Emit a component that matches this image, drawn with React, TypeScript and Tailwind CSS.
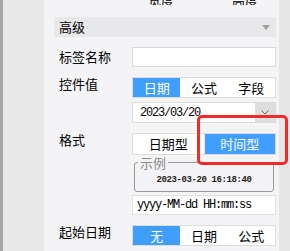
import React from "react";

const Seg = ({ items, active }: { items: string[]; active: number }) => (
  <div className="flex h-[21px] w-[144px] border border-[#dcdcdc] bg-white">
    {items.map((t, i) => (
      <div
        key={t}
        className={
          i === active
            ? "flex flex-1 items-center justify-center bg-[#409eff] text-white"
            : "flex flex-1 items-center justify-center text-black"
        }
      >
        {t}
      </div>
    ))}
  </div>
);

export default function App() {
  return (
    <div className="relative flex h-[251px] w-[290px] overflow-hidden font-['Noto_Sans_CJK_SC','Noto_Sans',sans-serif] text-[13px] text-black">
      <div className="w-[3px] bg-[#a6a6a6]" />
      <div className="w-[41px] bg-[#e8e8e8]" />
      <div className="w-[235px] bg-[#f4f4f6] pl-[10px] pr-[3px]">
        {/* cut off column headers */}
        <div className="h-[5px] overflow-hidden">
          <div className="-mt-[7px] flex pl-[94px] leading-[13px]">
            <span>宽度</span>
            <span className="ml-[58px]">高度</span>
          </div>
        </div>

        <div className="mt-[12px] flex h-[20px] items-center justify-between bg-[#e8e8ea] pl-[5px] pr-[6px]">
          <span>高级</span>
          <svg width="8" height="5" viewBox="0 0 8 5">
            <path d="M0 0 H8 L4 5 Z" fill="#a0a0a0" />
          </svg>
        </div>

        <div className="mt-[10px] flex items-center">
          <div className="w-[78px] pl-[5px]">标签名称</div>
          <div className="h-[20px] w-[144px] border border-[#d9d9d9] bg-white" />
        </div>

        <div className="mt-[10px] flex items-start">
          <div className="w-[78px] pl-[5px] leading-[14px]">控件值</div>
          <Seg items={["日期", "公式", "字段"]} active={0} />
        </div>

        <div className="ml-[78px] mt-[4px] flex h-[21px] w-[144px] border border-[#dcdcdc] bg-white">
          <div className="flex flex-1 items-center pl-[7px] font-['Liberation_Mono',monospace] text-[12px] tracking-[-1.2px]">
            2023/03/20
          </div>
          <div className="flex w-[20px] items-center justify-center bg-[#dedede]">
            <svg width="8" height="5" viewBox="0 0 8 5">
              <path d="M0.5 0.5 L4 4 L7.5 0.5" fill="none" stroke="#666" strokeWidth="1" />
            </svg>
          </div>
        </div>

        <div className="mt-[10px] flex items-start">
          <div className="w-[78px] pl-[5px] leading-[14px]">格式</div>
          <div className="grid h-[22px] w-[144px] grid-cols-2 gap-px border border-[#dcdcdc] bg-[#e6e6e6]">
            <div className="flex items-center justify-center bg-white">日期型</div>
            <div className="flex items-center justify-center bg-[#409eff] text-white">时间型</div>
          </div>
        </div>

        <fieldset className="ml-[80px] mt-[1px] w-[140px] rounded-[3px] border border-[#9a9a9a]">
          <legend className="ml-[3px] px-[2px] text-[13px] leading-[13px] text-[#8a8a8a]">示例</legend>
          <div className="h-[22px] pt-[6px] text-center font-['Liberation_Mono',monospace] text-[9px] font-bold leading-[10px] tracking-[-0.4px] text-[#222]">
            2023-03-20 16:18:40
          </div>
        </fieldset>

        <div className="ml-[78px] mt-[3px] flex h-[20px] w-[144px] items-center border border-[#e2e2e2] bg-white pl-[4px] font-['Liberation_Mono',monospace] text-[12px] tracking-[-1.2px]">
          yyyy-MM-dd HH:mm:ss
        </div>

        <div className="mt-[10px] flex items-start">
          <div className="w-[78px] pl-[5px] leading-[14px]">起始日期</div>
          <Seg items={["无", "日期", "公式"]} active={0} />
        </div>
      </div>
      <div className="flex-1 bg-[#e6e6e6]" />

      {/* highlight annotation */}
      <div className="absolute left-[197px] top-[115px] h-[50px] w-[91px] rounded-[5px] border-[3px] border-[#f32a2a]" />
    </div>
  );
}
